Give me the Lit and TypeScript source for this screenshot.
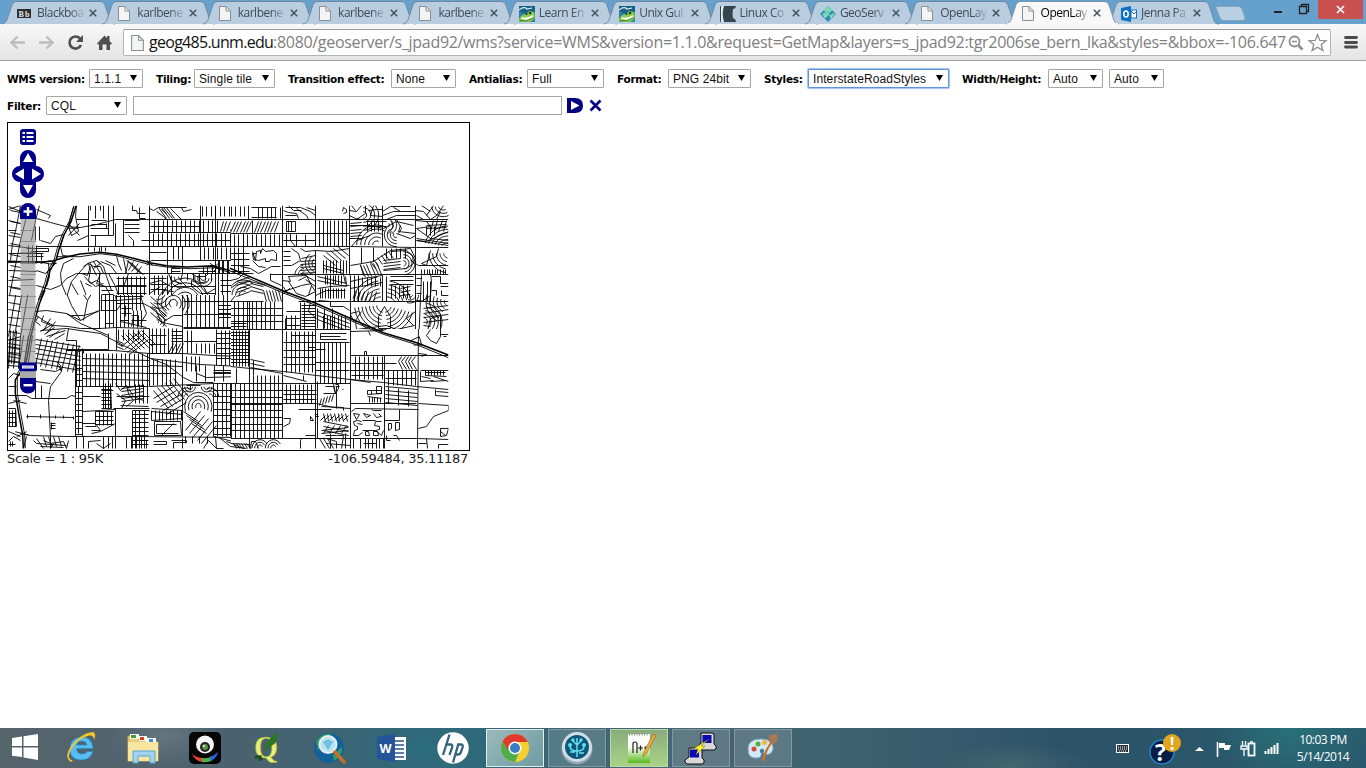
import { LitElement, html, svg, css } from "lit";
import { customElement, property } from "lit/decorators.js";

const pageIcon = svg`<path d="M.5.5H7L11.500 5V14.500H.5Z" fill="#f4f4f4" stroke="#8b8f94"/><path d="M7 .5V5H11.500" fill="none" stroke="#8b8f94"/>`;

const favicons: Record<string, unknown> = {
  bb: svg`<rect y="3" width="14" height="9" fill="#2b2d30"/><text x="1.500" y="10.500" font-size="8" font-weight="bold" fill="#e8e8e8" font-family="Liberation Serif" textLength="11">Bb</text>`,
  page: svg`<g transform="translate(1 0)">${pageIcon}</g>`,
  croc: svg`<rect width="16" height="16" fill="#2c84a7"/><path d="M0 0H16V6Q8 10 0 5Z" fill="#17607f"/><path d="M0 4Q5 0 8 3l5-1" stroke="#d7edf0" stroke-width="1.200" fill="none"/><path d="M0 15.500Q0 9 7 8l3-3 5 1 1 4q-1 5-6 6Z" fill="#8acb4a"/><path d="M2 11q6 2 12-2v2q-5 4-11 2Z" fill="#fff"/><path d="M1 14.500Q8 16 14 12" stroke="#4b8d2a" fill="none"/><circle cx="11" cy="7" r="1.300" fill="#234"/><circle cx="7.500" cy="8" r="1" fill="#234"/>`,
  linux: svg`<rect width="16" height="16" fill="#344650"/><path d="M1 0H5Q2 8 5 16H1Z" fill="#e2eaf0"/><path d="M13 3Q15.500 3 16 0V16Q15.500 12 13 12.500Q12 8 13 3Z" fill="#b9cbdd"/><path d="M6 0H4Q1.500 8 4 16H6Q4 8 6 0Z" fill="#344650"/>`,
  geo: svg`<path d="M8 0L16 8 8 16 0 8Z" fill="#2a91ad"/><path d="M8 0L12 4 8 7 4 4ZM2 8l4-2 2 4-3 2ZM10 9l4-2 1 1-5 5Z" fill="#7fd8b4"/><path d="M4 4L12 12M12 4L4 12" stroke="#9fe0e0" stroke-width=".8"/>`,
  outlook: svg`<path d="M0 2L10 0V16L0 14Z" fill="#0f72c3"/><rect x="10" y="4" width="5.500" height="8" fill="#fff" stroke="#0f72c3"/><path d="M10 5l3 3 3-3" fill="none" stroke="#0f72c3"/><ellipse cx="5" cy="8" rx="2.200" ry="3" fill="none" stroke="#fff" stroke-width="1.500"/>`,
};

@customElement("browser-tab")
class BrowserTab extends LitElement {
  @property() icon = "page";
  @property() label = "";
  @property({ type: Boolean, reflect: true }) active = false;
  static styles = css`
    :host { display: flex; width: 100.360px; height: 24px; position: relative; flex: none; color: #3f4c5a; }
    :host([active]) { z-index: 2; color: #000; }
    .shape { position: absolute; left: 0; top: 0; width: 114px; height: 25px; }
    .body { position: relative; display: flex; align-items: center; width: 100%; padding: 3px 4px 0 15px; box-sizing: border-box; }
    .fav { width: 16px; height: 16px; margin-right: 4px; flex: none; }
    .label { font: 12px/18px "Open Sans", sans-serif; letter-spacing: -0.5px; width: 47px; margin-top: -1px; white-space: nowrap; mask-image: linear-gradient(90deg, #000 70%, transparent 105%); }
    .x { width: 8px; height: 8px; margin-left: 5px; margin-top: -1px; flex: none; }
  `;
  render() {
    return html`<svg class="shape" viewBox="0 0 114 25">
        <path d="M0 24C5 23 5 19 7 14 10 5 10 1.500 15 1.500H98C103 1.500 103 6 106 14 108 20 108 24 113 24" fill=${this.active ? "#f8f8f8" : "#b9cde0"} stroke=${this.active ? "#7795ad" : "#71879b"} stroke-width="1"></path>
        ${this.active ? svg`<path d="M1 24H112" stroke="#f8f8f8" stroke-width="2"/>` : ""}
      </svg>
      <div class="body">
        <svg class="fav" viewBox="0 0 16 16">${favicons[this.icon]}</svg>
        <span class="label">${this.label}</span>
        <svg class="x" viewBox="0 0 8 8"><path d="M.8.8L7.200 7.200M7.200.8L.8 7.200" stroke="#46535f" stroke-width="1.500"></path></svg>
      </div>`;
  }
}

@customElement("drop-select")
class DropSelect extends LitElement {
  @property() value = "";
  @property({ type: Number }) width = 60;
  @property({ type: Boolean, reflect: true }) focused = false;
  static styles = css`
    :host { display: block; flex: none; }
    .box { box-sizing: border-box; height: 19px; border: 1px solid #a6a6a6; border-radius: 1px; display: flex; align-items: center; justify-content: space-between; padding: 0 5px 0 4px; font: 12px/17px "Liberation Sans", Arial, sans-serif; color: #111; background: #fff; white-space: nowrap; }
    :host([focused]) .box { border-color: #5f94dd; box-shadow: 0 0 1px 1px #9fc0ee; }
    span { padding-top: 2px; letter-spacing: 0.09px; }
    svg { width: 7px; height: 6px; margin-bottom: 1px; }
  `;
  render() {
    return html`<div class="box" style="width:${this.width}px"><span>${this.value}</span><svg viewBox="0 0 7 6"><path d="M0 0H7L3.500 6Z"></path></svg></div>`;
  }
}

/* Street network. Each survey sheet has its own origin; sheet units are a third of a pixel. */
const sheets: Record<string, [number, number]> = { A: [0, 120], B: [230, 195], C: [0, 290], D: [230, 320] };
const snap = (v: number) => Math.floor(v) + 0.5;

/* Polylines, separated by semicolons. */
function lines(s: string, src: string, exact = false) {
  const [ox, oy] = sheets[s];
  return src.split(";").map((part) => {
    const n = part.trim().split(/\s+/).map(Number);
    let d = "";
    for (let i = 0; i + 1 < n.length; i += 2) {
      const x = ox + n[i] / 3, y = oy + n[i + 1] / 3;
      d += (i ? "L" : "M") + (exact ? x.toFixed(1) + " " + y.toFixed(1) : snap(x) + " " + snap(y));
    }
    return d;
  }).join("");
}
/* One segment repeated n times at a fixed offset: x1 y1 x2 y2 dx dy n. */
function repeat(s: string, src: string) {
  return src.split(";").map((part) => {
    const [a, b, c, d, dx, dy, n] = part.trim().split(/\s+/).map(Number);
    let out = "";
    for (let i = 0; i < n; i++) out += lines(s, `${a + i * dx} ${b + i * dy} ${c + i * dx} ${d + i * dy}`);
    return out;
  }).join("");
}
/* Nested arcs: cx cy rx ry step n from to (degrees). */
function arcs(s: string, src: string) {
  return src.split(";").map((part) => {
    const [cx, cy, rx, ry, st, n, f, t] = part.trim().split(/\s+/).map(Number);
    let out = "";
    for (let i = 0; i < n; i++) {
      let p = "";
      for (let k = 0; k <= 10; k++) {
        const a = ((f + ((t - f) * k) / 10) * Math.PI) / 180;
        p += `${cx + Math.cos(a) * (rx + st * i)} ${cy + Math.sin(a) * (ry + st * i)} `;
      }
      out += lines(s, p, true);
    }
    return out;
  }).join("");
}

const streets = {
  northWest: [
    lines("A", `108 296 150 308 195 320 240 322 290 312 345 298 440 298 720 297;445 338 720 338;425 360 720 360;108 379 720 379;455 420 720 420;230 461 720 461;
      265 256 265 380;325 256 325 345;339 256 339 345;345 310 345 378;370 298 370 378;448 256 448 540;503 300 503 460;548 378 548 460;600 256 600 420;645 256 645 540;
      270 325 325 325;270 345 340 345;230 297 265 297;232 360 265 345;385 345 400 360 400 378;397 256 397 270 410 270 412 280 437 280;418 262 418 295 437 295;
      448 265 460 272 475 262 520 262 560 262;470 275 490 290 500 297;485 268 500 280;510 265 525 280 545 297;545 262 550 275 575 268;
      272 256 272 270;285 256 285 295;300 256 300 270;310 256 310 295;320 310 320 325;285 345 285 379;305 379 305 395;
      90 256 75 300 60 360 48 420 38 480 26 540;60 256 50 320 38 370 30 420;118 256 105 300 95 360;24 268 60 256;24 300 60 310;24 345 60 352;24 375 100 385;24 400 130 400;24 450 110 455;24 480 100 478;24 500 60 505;24 260 60 275;110 268 150 285 145 295;24 330 50 330;
      120 360 150 370 165 350 190 342;80 385 145 385 145 395 90 395;80 400 125 400 125 420;80 410 130 410;85 375 85 430;98 375 98 430;110 375 110 430;
      220 258 205 320 215 345 235 335 225 290 228 256;205 310 238 345;238 310 205 345;190 345 180 380 188 405 220 410;
      180 460 190 430 220 415;180 460 185 490 205 540;215 490 245 540;195 540 215 485 235 461;240 480 255 520 260 540;110 495 150 508 180 495 200 475 230 461;
      110 450 135 460 150 445 165 430 150 420 120 430;145 430 148 470 140 500;
      235 461 262 430 290 420 300 430 280 445;250 440 265 430 280 440 300 440 310 460;265 430 270 450 265 480 285 500 310 490;290 420 310 440 320 470 335 510;300 425 330 435 350 461;315 420 345 435;252 470 270 490 290 480 305 490;255 490 275 500;300 461 290 490 315 500 340 540;325 461 345 500 360 540;
      270 430 290 465;280 425 300 461;270 440 262 465 245 461;
      385 461 370 500 370 540;370 415 380 461;385 420 375 461;400 425 385 450;350 405 355 430 365 450;415 430 395 455;425 440 410 461;
      515 445 540 445;515 445 515 461;515 455 540 455;575 461 590 470 615 470 625 461;575 480 595 490 620 485;595 465 600 490;
      448 490 480 480 510 500 560 500 645 500;505 461 515 480 545 490;548 461 540 480 560 500;575 480 575 500 600 520 645 520;600 500 620 520 645 505;
      298 500 440 500;298 461 298 540;448 520 480 500;465 540 490 510 520 515`),
    repeat("A", `463 300 463 337 13.500 0 15;461 340 461 378 13.500 0 20;606 258 606 290 13.500 0 9;372 300 418 300 0 12 4;275 300 320 300 0 12 2;
      670 303 660 335 10 0 7;475 262 500 295 8 0 4;265 381 265 395 17 0 4;613 381 613 419 13 0 9;655 421 655 540 13 0 6;595 440 645 440 0 13 2;
      356 470 356 540 13 0 8;350 475 440 475 0 22 3;462 465 462 540 13 0 5;450 475 500 475 0 17 4;305 510 340 510 0 12 3;660 480 720 480 0 17 4;
      561 461 561 480 18 0 5;30 270 60 278 0 33 8;105 320 105 360 14 0 2;380 420 400 432 6 6 6;450 320 600 320 0 1 1;658 421 658 461 13 0 5;448 398 500 398 0 1 1;520 380 520 419 14 0 2;610 440 610 461 13 0 3`),
    arcs("A", `555 545 15 15 14 5 180 360;545 470 10 10 12 3 90 180;610 475 8 6 9 3 0 200`),
  ].join(""),

  northEast: [
    lines("B", `0 73 655 73;0 115 357 115;0 155 360 155 560 157 655 157;0 235 70 235;120 237 655 237;0 319 100 319;205 318 655 318;0 402 655 402;
      158 32 158 450;257 32 257 155;257 165 257 402;357 32 357 240;360 240 362 450;458 32 458 155;458 240 458 320;556 32 556 402;575 240 565 450;57 320 57 402;
      56 32 56 73;40 115 40 225;68 75 68 115;337 50 340 37 348 42 348 52 340 55;357 45 380 50 395 32;357 60 375 70 390 73;
      168 78 195 78 195 108 168 108 168 78;176 78 176 108;185 78 185 108;160 45 175 52 200 55 205 70;165 38 210 38 240 50 255 60;165 62 200 62;200 40 230 60 235 73;175 32 190 45 215 45;230 38 255 45;
      180 115 180 135 195 155;160 135 257 135;68 170 75 195 80 170 90 165 90 175 97 160 105 168 130 165 140 175 138 195 120 192 118 200 107 200 107 190 85 197 70 192 66 175 80 175;
      30 215 60 220 85 235 125 215 150 215;68 195 85 215 105 218;122 235 122 255 155 270;185 160 205 175 210 195 185 210 160 210;
      158 255 180 260 175 245 225 240 230 245 205 255;230 240 245 270 257 290;175 260 200 295 225 305 257 290;160 290 215 270 245 265;245 270 235 300;
      210 160 225 170 257 165;215 190 257 180;257 165 300 170 357 160;360 210 430 200 480 165 540 160 556 190;395 158 395 205;430 158 430 200;
      480 170 530 165 548 180 550 205 530 220 460 225;390 208 400 240;540 195 565 210 655 210;600 165 590 210 575 205 620 185 625 160;
      262 280 300 275 357 270;257 300 290 285 345 285;300 240 300 310;345 245 350 270;362 280 390 275 458 262;362 260 400 250 458 240;265 315 300 320 300 335 340 335 357 345;
      405 32 405 55 380 73;430 32 420 60 458 65;458 50 480 35 540 35;458 60 490 48 556 48;470 73 500 60 556 60;490 38 510 48;365 32 375 45;415 45 440 42 458 42;
      556 45 580 50 600 73;575 32 600 50;600 73 620 60 640 32;590 60 610 32;620 73 630 50;560 60 580 73;
      357 92 420 90 460 100 500 80;500 80 550 90;510 90 505 110 556 115;500 115 540 130 556 120;560 100 600 130 655 135;560 135 590 140 655 110;
      480 73 490 95 475 115;500 73 515 100 505 115;556 75 590 80 600 95 560 100;357 130 395 130 420 120;365 155 380 135 400 130;
      600 235 605 260 600 300 575 320;630 245 630 265 655 265;630 275 655 275;635 285 635 300 655 300;605 245 630 245;605 285 620 285 620 300;
      362 402 362 355 385 350;240 320 235 350 260 370;500 402 470 390 380 402;415 402 420 420;630 402 620 440 600 442 590 420 600 370 630 360 632 402;
      445 365 445 400;480 365 480 400;445 365 462 335 480 365;445 400 480 400;0 255 25 250 40 235;15 300 0 318;110 270 60 260;257 240 257 290;340 237 345 265;
      0 280 25 262 60 258;380 402 375 375 395 350;550 390 530 370 556 350;500 402 552 390`),
    repeat("B", `4 35 4 65 13 0 4;85 38 85 70 13 0 6;15 78 0 112 10 0 6;85 78 72 112 10 0 7;12 118 12 155 13.500 0 11;0 157 0 235 13 0 4;0 175 57 175 0 18 4;
      170 118 170 155 28 0 3;268 75 268 155 11.500 0 8;65 37 140 37 0 30 2;280 195 280 235 10 0 8;280 180 315 210 10 -7 5;280 210 340 225 0 10 2;212 200 255 195 0 9 5;
      390 212 405 247 10 -2 6;420 200 435 220 11 -6 6;460 195 510 190 0 9 4;575 222 575 238 8 0 10;262 245 350 265 0 10 2;270 280 270 310 8 0 10;285 240 285 268 8 0 7;
      480 245 550 245 0 11 3;485 270 485 310 12 0 5;510 280 540 275 0 11 3;12 320 12 402 13.500 0 10;0 340 160 340 0 20 3;0 385 50 385 0 10 2;170 350 210 350 0 20 3;210 322 210 402 14 0 2;
      215 330 255 330 0 9 8;262 340 262 400 22 0 3;262 350 357 385 0 12 3;280 362 280 402 11 0 7;270 415 345 415 0 17 2;270 415 270 432 0 0 1;180 415 255 415 0 18 2;
      180 402 180 450 13 0 6;170 360 170 402 13 0 3;9 405 9 450 9 0 6;0 411 60 411 0 9 5;412 75 412 110 11 0 4;410 78 470 78 0 16 2;362 85 395 82 0 10 5;373 242 373 318 12 0 2;
      590 80 650 78 0 10 3;590 95 590 120 11 0 3;580 340 655 330 0 14 4;580 260 580 318 11 0 3;580 390 600 395 0 12 1;470 160 470 190 14 0 5;
      20 260 60 245 0 11 5;60 265 100 275 0 10 3;100 285 110 318 9 0 6;380 290 370 318 12 0 6;640 420 655 420 0 6 2;560 130 655 145 0 5 2;610 75 600 110 13 0 4;
      470 245 470 318 0 0 1;385 247 385 275 13 0 6;560 250 575 250 0 22 4;165 370 165 402 0 0 1;160 170 180 170 0 13 3;225 240 257 260 0 14 2`),
    arcs("B", `462 330 22 22 11 7 15 80;462 330 22 22 11 7 100 175;458 325 30 20 12 6 190 260;465 325 30 20 12 5 280 350;400 60 10 10 12 4 270 450;440 150 12 12 12 5 180 300;
      500 120 10 8 9 4 90 220;470 90 8 8 11 3 -40 60;655 175 14 14 11 5 100 180;520 205 8 8 9 4 270 440;655 155 20 12 10 6 190 270;580 380 12 12 11 5 -80 50;655 320 12 12 11 6 120 200;
      640 35 14 10 10 3 60 180;225 240 10 10 10 3 180 260;40 300 12 12 11 4 180 310;262 205 16 16 10 3 110 230;540 300 8 6 9 3 0 110`),
  ].join(""),

  southWest: [
    lines("C", `200 182 340 182 447 190 548 190 640 196 720 200;550 115 720 115;247 175 247 440;298 0 298 115;315 30 315 115;348 20 348 182;548 0 548 440;447 115 447 290;325 130 325 178 200 178;
      105 65 140 62 200 70 240 100 325 135 325 178;200 70 240 90 295 60;215 75 250 75 295 65;195 0 215 45 240 90;240 0 262 30 250 90;262 30 280 0;110 75 130 90 160 105 205 108 240 115 300 115;298 115 348 112 447 115;315 100 340 100;
      200 115 300 130 370 165 450 205 500 222 550 262 580 278 640 278;450 205 600 222 720 230;205 115 200 150 228 150 230 180 200 180;
      130 75 125 95 160 110;115 80 105 95 120 105;150 85 130 120;165 95 140 130;120 120 200 115;140 140 195 120;24 150 60 140;
      120 238 165 245 185 235;175 225 185 245 150 290 145 330 150 440 150 475;105 275 150 280;185 245 180 225 170 215;
      24 315 80 315 95 325 200 325 215 315 225 320;105 265 105 325;125 285 125 325;80 378 220 383;82 372 82 384;120 373 120 385;165 376 165 385;190 376 190 386;220 378 220 388;150 400 165 400;150 407 165 407;150 414 165 414;155 398 155 418;
      60 430 90 436 200 438 290 440 400 440 720 443;24 340 60 330;24 290 50 290;60 256 40 250 24 265;40 330 80 340;24 425 60 440;70 475 80 440;24 455 40 440 60 450;
      225 182 225 440;236 290 236 430;247 365 300 360 345 358;247 320 300 318;247 400 285 400 300 420 275 420;255 410 290 410;275 430 300 425 345 400;
      345 280 360 300 380 285 385 310 400 330 380 350;350 310 375 330 365 355;385 295 400 320 430 330;330 290 335 355;305 300 340 300;
      398 360 398 475;418 360 418 440;398 360 447 360;462 395 542 395 545 437 462 437 462 395;470 402 470 430 535 430;470 402 530 402;485 437 510 410 520 400;
      455 355 548 362;455 365 548 372;455 390 548 385;640 280 640 440;560 285 600 285;570 300 570 285;640 440 720 460;
      345 355 345 475;230 440 230 475;250 440 250 475;265 475 265 455 300 450;290 460 310 475 330 460;
      100 450 110 460 200 465;110 445 130 475;130 450 150 460 190 455 200 475;150 475 160 460;120 470 190 472;205 450 200 475;
      460 455 500 455 500 462 460 462;515 450 560 450 560 458 520 458 520 475;425 450 440 450 440 475;645 440 650 475 670 475;610 475 625 450 650 475;660 445 690 470 720 462;680 455 720 470;
      24 355 45 355 50 410 24 410;24 462 45 462;30 455 30 470;38 455 38 470;548 445 548 475;
      335 0 345 20 350 30 420 25 430 0;350 60 365 40 385 40 385 90 360 90;375 45 375 80;365 55 395 55;365 70 395 70;395 75 415 75 415 110;395 90 440 90;400 75 395 110;420 20 440 70 420 100;430 40 470 60 480 95 500 100 548 110;480 60 500 80;490 95 520 75 548 75;
      447 225 548 228;447 250 530 250;590 250 620 262 720 258;640 247 720 247;447 290 640 280 720 280;250 182 250 190;345 290 445 290;348 320 447 320;340 355 447 355`),
    repeat("C", `259 190 259 290 13 0 15;247 205 447 210 0 20 4;247 290 340 290 0 1 1;458 115 458 190 12 0 7;450 135 500 135 0 27 3;515 125 548 125 0 10 4;505 190 520 160 10 0 4;
      562 0 562 115 13.500 0 12;550 35 720 35 0 38 3;655 45 720 45 0 12 4;562 120 562 190 13 0 2;590 160 590 190 13 0 5;663 120 663 225 13 0 5;650 118 650 225 0 0 1;650 130 720 130 0 15 6;
      560 200 560 245 13 0 4;550 155 650 155 0 3 1;640 240 700 240 0 10 2;590 225 590 275 27 0 4;
      310 280 310 355 7 0 4;305 288 335 288 0 11 7;365 295 430 285 0 10 5;405 282 405 340 12 0 4;360 345 445 350 0 8 1;285 365 285 405 12 0 5;285 365 340 365 0 13 4;
      398 372 445 372 0 13 8;405 360 405 475 14 0 3;455 362 455 390 11 0 9;225 235 247 235 0 18 12;228 182 228 290 9 0 2;
      460 300 505 355 12 -7 6;460 325 520 290 10 12 5;575 400 620 430 -8 -12 4;555 420 600 365 12 10 5;365 170 420 125 8 8 4;365 135 410 180 12 -3 6;
      653 280 653 440 13 0 6;640 300 720 300 0 19 8;30 140 24 235 16 0 3;70 135 55 235 14 0 3;125 145 105 225 16 3 8;24 160 60 165 0 13 6;105 148 240 170 0 14 6;120 125 150 105 14 8 4;
      24 15 60 20 0 22 10;50 0 25 140 18 0 3;300 30 348 30 0 30 2;303 0 303 60 12 0 4;350 0 350 60 12 0 7;350 20 430 20 0 19 2;360 95 440 112 0 6 1;
      310 440 310 475 14 0 3;380 440 380 475 15 0 4;130 440 140 470 15 0 4;555 440 555 460 22 0 4;28 360 28 410 9 0 3;24 370 50 370 0 13 3;355 118 355 150 15 0 6;348 150 370 160 0 9 3;
      460 208 460 285 13 0 6;360 60 360 112 13 0 6;315 60 315 112 12 0 3;450 20 500 60 0 16 4;30 120 24 220 9 0 3`),
    arcs("C", `520 40 12 12 12 4 120 400;475 15 14 14 13 3 20 120;595 350 8 10 11 4 160 380;560 320 8 8 9 3 180 300;630 320 8 8 9 3 250 360;570 290 8 8 8 2 0 180;620 290 8 8 8 2 0 180;470 95 6 6 9 3 270 400`),
  ].join(""),

  southEast: [
    lines("D", `0 27 360 27;58 27 58 385;157 0 157 355;257 0 257 385;262 185 262 355;360 0 362 385;463 105 463 385;565 0 562 385;0 138 60 145 160 155 260 167 360 178 460 188 560 198 655 207;
      60 118 103 126;60 130 103 138;60 142 157 160;70 120 70 165;160 68 257 68;257 68 357 68;362 107 655 107;362 150 565 150;0 190 360 190;0 250 260 250 310 262 360 265;362 250 560 250;
      270 40 350 40;270 57 350 57;270 40 270 57;270 50 330 50;402 107 402 93 410 93 410 107;362 35 460 30 500 10;415 35 420 47;235 68 235 82 257 82;
      160 165 230 185;220 165 220 180;20 145 20 190;310 190 315 220 325 205 325 192 315 192;285 200 310 200 315 220 280 220;320 200 320 265;315 200 327 200;338 208 340 208;
      412 210 455 210 455 220 412 222 412 210;440 198 455 198 455 220 440 220 440 198;425 210 425 222;412 230 455 235;205 267 305 267;275 260 340 262 340 270;
      365 275 375 265 565 268;425 268 430 272 455 270;463 302 508 302 508 268;565 325 590 320 610 290 655 270;655 255 655 270;565 250 655 255;
      370 280 378 297 387 282 370 280;400 280 410 293 420 285 400 280;430 280 440 293 455 290 445 280;
      395 303 382 300 370 303 372 316 383 318 383 328 372 330 370 345 385 347 398 338;405 345 405 333 415 333 418 347 405 345;430 347 430 335 443 335 445 347 430 347;
      455 303 435 303 433 316 447 318 447 328 436 330 455 347 460 330;398 300 435 300;398 330 436 330;383 310 398 312;
      475 330 475 310 485 310 485 325 475 330;495 330 495 308 508 308 508 328 495 330;470 345 470 360 482 360;490 345 500 345 508 360;
      160 295 180 295 178 310 160 318;210 385 212 360 215 355 290 355 320 365 320 385;225 345 257 345;240 290 250 300 240 302 240 290;255 280 265 290 255 290;
      290 370 360 375;300 340 300 385;320 345 340 345 335 385;285 345 320 345;345 340 345 385;
      565 100 590 102 575 110;572 150 655 150;572 155 572 185 610 180;587 150 587 165 650 168;587 158 645 158;610 170 655 185;600 185 650 182;575 170 600 175;615 207 615 225 655 230;620 215 655 218;
      630 325 655 325 650 345 630 350 630 325;630 335 645 345;565 355 655 357;590 355 592 385;565 370 590 370;625 385 625 372 655 372;
      600 27 590 45 600 60 620 70 630 50 632 0;632 42 655 42;640 50 650 48;360 178 420 186;
      362 5 400 25 460 28;375 0 395 15 500 15 505 0;510 20 550 18 552 0;520 10 545 8;
      0 370 60 372;0 380 50 385;10 372 40 385;60 385 65 365 75 365 85 385`),
    repeat("D", `9 30 9 138 9 0 6;0 37 58 37 0 10 10;5 0 5 27 13.500 0 11;170 35 170 157 13 0 7;160 90 257 90 0 21 3;185 45 255 45 0 20 1;270 68 270 190 12.500 0 7;257 88 285 88 0 1 1;257 128 357 128 0 22 2;
      375 108 375 178 13.500 0 7;365 130 500 130 0 1 1;515 110 505 125 10 0 5;505 125 518 148 10 0 5;476 150 476 196 13.500 0 7;467 175 560 175 0 1 1;70 165 70 355 12.500 0 7;4 190 4 355 13.500 0 4;0 212 157 212 0 20 7;
      170 192 170 250 12.500 0 7;160 210 260 210 0 14 3;465 200 563 207 0 12 5;418 232 418 247 8 0 5;275 235 268 255 9 -3 5;280 280 285 305 11 0 7;280 305 355 320 0 13 3;270 300 285 285 14 0 6;275 330 355 322 0 10 2;
      405 355 405 385 11 0 6;400 370 440 370 0 1 1;370 355 370 385 20 0 2;595 150 595 165 9 0 6;10 370 20 385 8 0 6;0 355 565 355 0 1 1;267 355 285 385 12 0 3;
      270 0 270 27 14 0 6;0 8 157 8 0 11 2;170 0 170 20 14 0 6;525 0 515 15 9 0 4;580 0 655 -8 0 12 2;280 340 295 315 18 0 4;365 165 460 165 0 1 1;476 200 476 250 30 5 3`),
    arcs("D", `90 385 8 10 8 3 180 330;130 385 8 10 8 3 180 330`),
  ].join(""),
};

const highways =
  lines("A", "24 424 110 427 155 424 195 412 240 402 300 397 350 403 400 415 450 428 500 437 560 441 640 437 690 452", true) +
  lines("A", "228 258 213 305 192 345 178 385 168 420 150 452 140 490 122 540", true) +
  lines("B", "0 220 90 258 160 288 257 325 360 370 460 413 560 443 655 480", true) +
  lines("C", "135 0 118 42 104 92 90 150 80 210 62 245 46 270 46 310 56 370 68 435 70 475", true);
const ramps =
  lines("A", "170 410 240 410 300 401 350 407 450 434 500 441 570 446 645 443 690 458;222 258 207 305 186 345 172 385 162 420 144 452 134 490 115 540;170 430 150 432 110 424 24 428", true) +
  lines("B", "0 228 90 264 160 294 257 331 360 376 460 418 560 449 655 488;160 275 175 300;155 300 180 280;362 360 372 380;540 438 568 425 575 450 550 450", true) +
  lines("C", "130 0 112 42 98 92 84 150 74 215 52 250 52 310 62 370 74 435 76 475;46 425 85 435;50 440 80 425", true) +
  lines("A", "440 420 458 436;455 420 440 436;630 430 660 450;655 430 635 450;640 455 660 435;205 325 235 325", true);

@customElement("wms-map")
class WmsMap extends LitElement {
  static styles = css`
    :host { display: block; width: 461px; height: 327px; border: 1px solid #000; overflow: hidden; }
    svg { display: block; width: 461px; height: 327px; }
  `;
  render() {
    return html`<svg viewBox="8 123 461 327">
      <defs>
        <clipPath id="tile"><rect x="8" y="205.500" width="440.500" height="243.500"></rect></clipPath>
        <clipPath id="nw"><rect x="8" y="205" width="223" height="90"></rect></clipPath>
        <clipPath id="ne"><rect x="231" y="205" width="218" height="124"></rect></clipPath>
        <clipPath id="sw"><rect x="8" y="295" width="223" height="155"></rect></clipPath>
        <clipPath id="se"><rect x="231" y="329" width="218" height="121"></rect></clipPath>
      </defs>
      <g clip-path="url(#tile)" fill="none" stroke="#000" stroke-linejoin="round" stroke-width=".9">
        <path d=${streets.northWest} clip-path="url(#nw)"></path>
        <path d=${streets.northEast} clip-path="url(#ne)"></path>
        <path d=${streets.southWest} clip-path="url(#sw)"></path>
        <path d=${streets.southEast} clip-path="url(#se)"></path>
        <path d=${highways} stroke-width="1.500"></path>
        <path d=${ramps} stroke-width=".9"></path>
      </g>
      <rect x="20.500" y="219" width="15" height="159" fill="#888" fill-opacity=".55"></rect>
      <path d="M20 230.500H36M20 241.500H36M20 252.500H36M20 263.500H36M20 274.500H36M20 285.500H36M20 296.500H36M20 307.500H36M20 318.500H36M20 329.500H36M20 340.500H36M20 351.500H36" stroke="#666" stroke-opacity=".55"></path>
      <g fill="#00008b">
        <rect x="20" y="129" width="16" height="16" rx="3"></rect>
        <path d="M20 158a8 8 0 0 1 16 0v8a8 8 0 0 1 0 16v8a8 8 0 0 1-16 0v-8a8 8 0 0 1 0-16Z"></path>
        <path d="M20 219v-8a8 8 0 0 1 16 0v8Z"></path>
        <rect x="19" y="362.500" width="18" height="9" rx="2"></rect>
        <path d="M20 378H36v8a8 7.500 0 0 1-16 0Z"></path>
      </g>
      <rect x="20" y="371.500" width="16" height="6.500" fill="#aaa"></rect>
      <g fill="#fff">
        <path d="M28 153l5 9H23ZM28 194l5-9H23ZM15 174l9-5.500v11ZM41 174l-9-5.500v11Z"></path>
        <rect x="26.800" y="207" width="2.400" height="9"></rect><rect x="23.500" y="210.300" width="9" height="2.400"></rect>
        <rect x="23.500" y="384" width="9" height="2.400"></rect>
        <path d="M22.500 132h2.500v2h-2.500ZM26.500 132h7v2h-7ZM22.500 136h2.500v2h-2.500ZM26.500 136h7v2h-7ZM22.500 140h2.500v2h-2.500ZM26.500 140h7v2h-7Z"></path>
      </g>
      <rect x="22.500" y="366" width="11" height="2" fill="#8c8cd0" stroke="#fff"></rect>
    </svg>`;
  }
}

const launchers: [string, number, unknown][] = [
  ["start", 46, svg`<path d="M4 7L14 5.500V15H4ZM15.500 5.300L30 3V15H15.500ZM4 16.500H14V26L4 24.700ZM15.500 16.500H30V29L15.500 26.500Z" fill="#fff"/>`],
  ["ie", 66, svg`<path d="M29 17.500H12.500Q13 23 18 23q4 0 5-2.500h6q-3 8.500-11.500 8.500Q6 29 6 18T17.500 6Q28 6 29 17.500ZM12.500 14H23q-1-4-5.300-4t-5.200 4Z" fill="#58bdf1" stroke="#2489cf" stroke-width=".7"/><path d="M7 31Q-1 26 8 14 18 2 28 1q5 0 2 8 0-5-5-4.500Q13 8 7 19 2 28 9 29.500Z" fill="#f5c52b"/>`],
  ["files", 58, svg`<path d="M2 5H11V8H18V7h5v4h9V30H2Z" fill="#e9cf7e" stroke="#c9a850"/><path d="M4 3H13V8H4ZM13 5h8v5h-8ZM20 7h10v5H20Z" fill="#fdfdf5"/><path d="M5 4h5v3H5Z" fill="#3ba52c"/><path d="M14 6h4v3h-4Z" fill="#e03b20"/><path d="M23 8h4v3h-4Z" fill="#3c8ddb"/><path d="M2 11H32V30H2Z" fill="#f7e5a2"/><path d="M7 20H29V32H24V25H12V32H7Z" fill="#9fd3ef" stroke="#5da3cf"/>`],
  ["cam", 66, svg`<rect x="1" y="1" width="32" height="32" rx="5" fill="#060606"/><path d="M4 23Q9 27 15 27v4Q7 30 4 23Z" fill="#e4462f"/><path d="M14 27q6 1 10-2l1 4q-5 3-11 2Z" fill="#49b447"/><path d="M22 26q5-2 8-5-1 6-7 9Z" fill="#2a63e0"/><circle cx="17" cy="13.500" r="9" fill="#f5f5f5"/><circle cx="17" cy="16" r="5" fill="#222"/><circle cx="17" cy="16" r="3" fill="#5b8d4b"/><circle cx="16" cy="15" r="1" fill="#fff"/>`],
  ["qgis", 60, svg`<text x="3" y="27" font-family="Liberation Serif" font-size="31" font-weight="bold" fill="#e9ee77" stroke="#8b9c2f" stroke-width=".5">Q</text><path d="M13 21Q14 9 26 1q1 12-6 14Z" fill="#2f7526"/><path d="M4 25l6-1 2 5-4 1-1-3-3 1Z" fill="#1f4f1d"/>`],
  ["globe", 64, svg`<circle cx="16" cy="17" r="15" fill="#12609a"/><path d="M3 10Q9 1 19 3L11 9 5 20ZM20 24l9-8q1 9-8 14Z" fill="#2f9b68"/><circle cx="15" cy="13.500" r="8.500" fill="#b8e3f0" stroke="#e8eef0" stroke-width="2"/><path d="M10 11q5-5 10 0l-5 8Z" fill="#73bfe2"/><path d="M22 21L31 31" stroke="#c56f27" stroke-width="3.500" stroke-linecap="round"/>`],
  ["word", 60, svg`<path d="M14 6H31V29H14Z" fill="#fff"/><path d="M20 10H29M20 14H29M20 18H29M20 22H29M20 26H29" stroke="#285493" stroke-width="1.700"/><path d="M2 6L20 3V31L2 28Z" fill="#24549a"/><text x="4.500" y="22" font-family="Open Sans" font-size="12.500" font-weight="bold" fill="#fff">W</text>`],
  ["hp", 62, svg`<circle cx="17" cy="17" r="15.700" fill="#fff"/><path d="M13.500 3.500L7 24M10.800 13.500h3.700q2.500 0 1.600 2.800L13.500 24M22.500 12.500L17 31.500M21.500 13.500h3.500q2.500 0 1.600 2.800l-1.800 5q-.7 2.200-3 2.200H19" fill="none" stroke="#32647e" stroke-width="2.300"/>`],
];
const windows: [string, unknown][] = [
  ["lit", svg`<circle cx="17" cy="17" r="14" fill="#f8d02e"/><path d="M17 17L3 17Q3 25 10 29 14 31 17 31L22 20Z" fill="#4fae49"/><path d="M4.500 10.500Q9 3 17 3q9 0 12.600 8H17q-7 0-7 9Z" fill="#df3a2d"/><path d="M4.500 10.500L12 22 4 20Q2 15 4.500 10.500Z" fill="#4fae49"/><circle cx="17" cy="17" r="6.500" fill="#fff"/><circle cx="17" cy="17" r="5" fill="#3b7cc4"/>`],
  ["", svg`<circle cx="17" cy="18" r="15.500" fill="#8ea5b9"/><circle cx="17" cy="16" r="15" fill="#d3dde6"/><circle cx="17" cy="16" r="12" fill="#0c5878"/><path d="M17 26V7M17 20q-7 0-7-5M17 20q7 0 7-5M17 14l-4-4M17 14l4-4M10 21h5M19 22h5" stroke="#65dfee" stroke-width="1.500" fill="none"/><g fill="#65dfee"><circle cx="10" cy="14" r="2"/><circle cx="24" cy="14" r="2"/><circle cx="13" cy="9" r="1.700"/><circle cx="21" cy="9" r="1.700"/></g>`],
  ["green", svg`<defs><linearGradient id="pad" x2="0" y2="1"><stop offset=".45" stop-color="#fbfbf8"/><stop offset="1" stop-color="#58bb1c"/></linearGradient></defs><path d="M6 3H28V32H6Z" fill="url(#pad)"/><path d="M7 3.500H26" stroke="#888" stroke-width="2" stroke-dasharray="1 1.500"/><path d="M11 22V12q0-1 2-1t2 2V22M16 17h5M18.500 14.500v5M22 17h4M24 15v4" stroke="#222" fill="none" stroke-width="1.200"/><path d="M21 26l1-5 9-18 3 1-9 18Z" fill="#e8a93d" stroke="#9c6820" stroke-width=".6"/>`],
  ["", svg`<path d="M17 2h11l2 1v10l2 2v3l-2 1H17l-2-2v-3l2-2Z" fill="#d8d8d8" stroke="#111"/><rect x="18.500" y="4" width="9" height="8" fill="#0808b8"/><path d="M5 17h10l3 2v8l2 2v3l-2 1H3l-2-2v-2l4-3Z" fill="#d8d8d8" stroke="#111"/><rect x="6" y="18.500" width="9" height="8" fill="#0808b8"/><path d="M25 8L17 15h4l-9 9 2-6H9Z" fill="#fff534" stroke="#6e6600" stroke-width=".5"/>`],
  ["", svg`<path d="M15 8Q2 8 2 18t9 9q4 0 4-3 1-4 4-1 6 2 8-5Q28 8 15 8Z" fill="#d3e9f5" stroke="#7da9c2"/><circle cx="8" cy="18" r="2.500" fill="#d34c37"/><circle cx="12" cy="13" r="2.500" fill="#5ca83e"/><circle cx="18.500" cy="11.500" r="2.500" fill="#efb63b"/><circle cx="16" cy="20" r="2.200" fill="#457c9e"/><path d="M17 30Q20 17 27 10" stroke="#c9732c" stroke-width="2.300" fill="none"/><path d="M23 4l8-1 1 6-5 5-4-3Z" fill="#a87853"/>`],
];

const tabs: [string, string][] = [["bb", "Blackboa"], ["page", "karlbene"], ["page", "karlbene"], ["page", "karlbene"], ["page", "karlbene"], ["croc", "Learn En"], ["croc", "Unix Gui"], ["linux", "Linux Co"], ["geo", "GeoServ"], ["page", "OpenLay"], ["page", "OpenLay"], ["outlook", "Jenna Pa"]];
const options: [string, number, string, number][] = [["WMS version:", 77, "1.1.1", 54], ["Tiling:", 33, "Single tile", 81], ["Transition effect:", 98, "None", 65], ["Antialias:", 53, "Full", 77], ["Format:", 46, "PNG 24bit", 83], ["Styles:", 39, "InterstateRoadStyles", 141], ["Width/Height:", 81, "Auto", 55]];

@customElement("app-root")
class AppRoot extends LitElement {
  static styles = css`
    :host { display: flex; flex-direction: column; width: 1366px; height: 768px; overflow: hidden; background: #fff; }
    .strip { display: flex; height: 24px; background: #66a1cd; padding-left: 2px; flex: none; }
    .newtab { width: 34px; height: 24px; margin-left: 8px; flex: none; }
    .winctl { display: flex; margin-left: auto; }
    .winctl .glyphs { width: 60px; height: 20px; }
    .close { width: 45px; height: 19px; background: #c9504f; margin-right: 3px; display: flex; justify-content: center; align-items: center; }
    .close svg { width: 9px; height: 9px; }
    .toolbar { height: 37px; box-sizing: border-box; border-bottom: 1px solid #a3a3a3; background: linear-gradient(#f8f8f8, #e4e4e4); display: flex; align-items: center; flex: none; }
    .nav { width: 123px; height: 36px; flex: none; }
    .omni { width: 1208px; height: 27px; box-sizing: border-box; border: 1px solid #b4b4b4; border-top-color: #999; border-radius: 2px; background: #fff; display: flex; align-items: center; flex: none; margin-top: 1px; }
    .page { width: 13px; height: 16px; margin: 0 5px 0 7px; flex: none; }
    .url { width: 1135px; white-space: nowrap; font: 16px/25px "Open Sans", sans-serif; letter-spacing: -0.31px; color: #808080; }
    .host { color: #111; letter-spacing: -0.72px; }
    .oicons { width: 42px; height: 22px; margin-left: 3px; flex: none; }
    .menu { width: 14px; height: 14px; margin-left: 13px; }
    .content { flex: 1; padding: 8px 7px 0; display: flex; flex-direction: column; align-items: flex-start; color: #000; }
    .row { display: flex; height: 19px; align-items: center; margin-bottom: 8px; font: bold 10.500px/19px "DejaVu Sans", Verdana, sans-serif; white-space: nowrap; }
    .group { display: flex; margin-right: 13px; gap: 5px; }
    .lab { letter-spacing: -0.27px; padding-top: 1px; }
    .pair { margin-left: 1px; }
    .filter { margin-bottom: 7px; gap: 6px; }
    .filter .group { margin: 0; }
    .field { width: 429px; height: 19px; box-sizing: border-box; border: 1px solid #a6a6a6; }
    .acts { width: 36px; height: 17px; margin-left: -1px; }
    .status { width: 461px; display: flex; justify-content: space-between; font: 13px/15px "DejaVu Sans", Verdana, sans-serif; color: #222; letter-spacing: -0.28px; }
    .taskbar { height: 40px; flex: none; display: flex; align-items: center; background:
      radial-gradient(ellipse 60px 30px at 165px 8px, #64757d 0, transparent 100%),
      radial-gradient(ellipse 110px 50px at 430px 20px, #2b6c7c 0, transparent 100%),
      radial-gradient(ellipse 80px 25px at 1010px 38px, #42656f 0, transparent 100%),
      radial-gradient(ellipse 80px 50px at 1290px 4px, #297078 0, transparent 100%),
      linear-gradient(90deg, #56646b, #496270 18%, #336577 35%, #466673 50%, #3f6070 62%, #2d5268 78%, #285b6d); }
    .launch { display: flex; width: 484px; padding: 0 0 0 2px; box-sizing: border-box; height: 36px; }
    .ico { display: flex; justify-content: center; align-items: center; flex: none; }
    .g { width: 34px; height: 34px; }
    .wins { display: flex; gap: 4px; padding-left: 2px; }
    .win { width: 58px; height: 38px; box-sizing: border-box; border: 1px solid #86989f; background: rgba(255,255,255,.14); display: flex; justify-content: center; align-items: center; }
    .win.lit { background: linear-gradient(135deg, #9abab9, #6f9ba3); border-color: #e4eeee; }
    .win.green { background: linear-gradient(#8aac7c, #a9d286); border-color: #b9d9a8; }
    .tray { margin-left: auto; width: 170px; height: 40px; }
    .clock { width: 86px; padding-right: 0; text-align: center; color: #fff; font: 12px/17px "Open Sans", sans-serif; letter-spacing: -0.5px; }
  `;
  render() {
    return html`
      <div class="strip">
        ${tabs.map(([i, l], n) => html`<browser-tab icon=${i} label=${l} ?active=${n === 10}></browser-tab>`)}
        <svg class="newtab" viewBox="0 0 34 24"><path d="M3 6.500H24Q27 6.500 28 9L31 18Q31 20.500 29 20.500H10Q7 20.500 6 18L2 8Q1.500 6.500 3 6.500Z" fill="#b9cfe2" stroke="#82a4c0"></path></svg>
        <div class="winctl">
          <svg class="glyphs" viewBox="1258 0 60 20"><path d="M1274 12H1282" stroke="#222" stroke-width="2"></path><path d="M1299.500 6.500H1306.500V13.500H1299.500ZM1301.500 6V4.500H1308.500V11.500H1307" fill="none" stroke="#222" stroke-width="1.300"></path></svg>
          <div class="close"><svg viewBox="0 0 9 9"><path d="M1 1L8 8M8 1L1 8" stroke="#fff" stroke-width="1.700"></path></svg></div>
        </div>
      </div>
      <div class="toolbar">
        <svg class="nav" viewBox="0 24 123 36">
          <g fill="none" stroke="#bdbdbd" stroke-width="2.300"><path d="M25 42.500H11.500M17.500 36.500L11.500 42.500 17.500 48.500M39 42.500H52.500M46.500 36.500L52.500 42.500 46.500 48.500"></path></g>
          <path d="M80 38.500A6 6 0 1 0 81 45" fill="none" stroke="#505050" stroke-width="2.700"></path><path d="M83 35V42H76Z" fill="#505050"></path>
          <path d="M97 43.500L104.500 35.500 107 38V36H109.500V41L112 43.500 111 44.500H110V50H106.500V44.500H102.500V50H99V44.500H98Z" fill="#505050"></path>
        </svg>
        <div class="omni">
          <svg class="page" viewBox="0 0 12 15">${pageIcon}</svg>
          <div class="url"><span class="host">geog485.unm.edu</span>:8080/geoserver/s_jpad92/wms?service=WMS&amp;version=1.1.0&amp;request=GetMap&amp;layers=s_jpad92:tgr2006se_bern_lka&amp;styles=&amp;bbox=-106.647</div>
          <svg class="oicons" viewBox="1287 32 42 22"><g fill="none" stroke="#8d8d8d"><circle cx="1294.500" cy="41.500" r="5" stroke-width="1.800"></circle><path d="M1298.500 45.500L1302.500 49.500" stroke-width="2.600"></path><path d="M1292 41.500H1297" stroke-width="1.500"></path><path d="M1317.500 34.500L1319.800 40.400 1326 40.700 1321.200 44.500 1322.900 50.500 1317.500 47.200 1312.100 50.500 1313.800 44.500 1309 40.700 1315.200 40.400Z" stroke-width="1.300"></path></g></svg>
        </div>
        <svg class="menu" viewBox="0 0 14 14"><path d="M1.500 2.500H12.500M1.500 7.500H12.500M1.500 12H12.500" stroke="#4b4b4b" stroke-width="2.800" stroke-linecap="round"></path></svg>
      </div>
      <div class="content">
        <div class="row">
          ${options.map(([l, w, v, s]) => html`<div class="group"><div class="lab" style="width:${w}px">${l}</div><drop-select value=${v} width=${s} ?focused=${l === "Styles:"}></drop-select>${w === 81 ? html`<drop-select class="pair" value="Auto" width="55"></drop-select>` : ""}</div>`)}
        </div>
        <div class="row filter">
          <div class="group"><div class="lab" style="width:34px">Filter:</div><drop-select value="CQL" width="81"></drop-select></div>
          <div class="field"></div>
          <svg class="acts" viewBox="567 96 36 17"><path d="M567 97H575Q583 97 583 104.500T575 112H567Z" fill="#00007f"></path><path d="M571 100L579.500 104.500 571 109Z" fill="#fff"></path><path d="M590.500 99.500L600.500 109.500M600.500 99.500L590.500 109.500" stroke="#00007f" stroke-width="2.600"></path></svg>
        </div>
        <wms-map></wms-map>
        <div class="status"><span>Scale = 1 : 95K</span><span>-106.59484, 35.11187</span></div>
      </div>
      <div class="taskbar">
        <div class="launch">${launchers.map(([, w, g]) => html`<div class="ico" style="width:${w}px"><svg class="g" viewBox="0 0 34 34">${g}</svg></div>`)}</div>
        <div class="wins">${windows.map(([c, g]) => html`<div class="win ${c}"><svg class="g" viewBox="0 0 34 34">${g}</svg></div>`)}</div>
        <svg class="tray" viewBox="1110 728 170 40">
          <rect x="1116.500" y="744.500" width="12" height="8" fill="#26323a" stroke="#fff"></rect><path d="M1118 747H1128M1118 749H1128M1119 751H1126" stroke="#fff" stroke-dasharray="1 1"></path>
          <circle cx="1162" cy="752" r="12" fill="#081d45" stroke="#2384c8" stroke-width="1.500"></circle>
          <text x="1155" y="761" font-family="Open Sans" font-size="23" font-weight="bold" fill="#fff">?</text>
          <circle cx="1172" cy="743" r="9" fill="#e5a41e"></circle><path d="M1170.500 737H1173.500L1173 745H1171ZM1170.500 747H1173.500V750H1170.500Z" fill="#fff"></path>
          <path d="M1195 751L1199.500 747 1204 751Z" fill="#fff"></path>
          <path d="M1217.500 742V757" stroke="#fff" stroke-width="1.600"></path><path d="M1219 743H1225V745H1231L1229 750H1224V748H1219Z" fill="#fff"></path>
          <rect x="1248.500" y="743.500" width="6" height="12" fill="none" stroke="#fff" stroke-width="1.800"></rect><path d="M1250 742H1253M1242.500 741V745M1245.500 741V745M1241 746H1247V749H1241ZM1244 749V756" stroke="#fff" stroke-width="1.300" fill="none"></path>
          <path d="M1265.500 754V751M1268.500 754V749M1271.500 754V747M1274.500 754V745M1277.500 754V743" stroke="#fff" stroke-width="2"></path>
        </svg>
        <div class="clock"><div>10:03 PM</div><div>5/14/2014</div></div>
      </div>`;
  }
}
